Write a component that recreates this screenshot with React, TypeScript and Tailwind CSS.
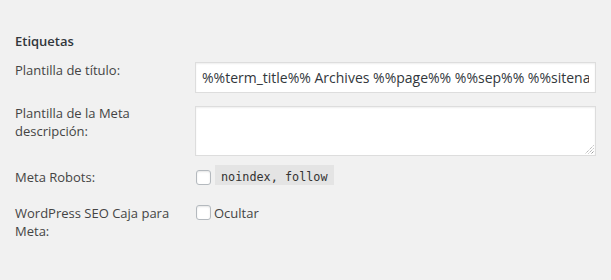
import React from "react";

const box =
  "bg-white border border-[#dddddd] shadow-[inset_0_1px_2px_rgba(0,0,0,0.07)]";
const check =
  "block w-[15px] h-[15px] rounded-[3px] border border-[#b4b9be] bg-white shadow-[inset_0_1px_2px_rgba(0,0,0,0.1)]";

export default function App() {
  return (
    <div
      className="w-[611px] h-[280px] bg-[#f1f1f1] text-[#444444] overflow-hidden"
      style={{ fontFamily: '"Open Sans", sans-serif' }}
    >
      <div className="pl-[15px] pt-[32px]">
        <h3 className="text-[13px] font-semibold text-[#32373c] leading-[18px] m-0">
          Etiquetas
        </h3>
        <div className="mt-[11px] flex flex-col">
          <div className="flex">
            <div className="w-[180px] text-[13px] leading-[18px]">Plantilla de título:</div>
            <div
              className={`${box} mt-[1px] w-[401px] h-[31px] px-[6px] flex items-center`}
            >
              <div className="w-full overflow-hidden whitespace-nowrap text-[14px] leading-[19px] text-[#32373c]">
                %%term_title%% Archives %%page%% %%sep%% %%sitename%%
              </div>
            </div>
          </div>
          <div className="flex mt-[11px]">
            <div className="w-[180px] text-[13px] leading-[18px]">
              Plantilla de la Meta
              <br />
              descripción:
            </div>
            <div className={`${box} relative mt-[2px] w-[401px] h-[50px]`}>
              <svg
                className="absolute right-[1px] bottom-[1px]"
                width="10"
                height="10"
                viewBox="0 0 10 10"
              >
                <line x1="9.5" y1="1.5" x2="1.5" y2="9.5" stroke="#9a9a9a" strokeWidth="1" strokeDasharray="1 1" />
                <line x1="9.5" y1="4.5" x2="4.5" y2="9.5" stroke="#9a9a9a" strokeWidth="1" strokeDasharray="1 1" />
                <line x1="9.5" y1="7.5" x2="7.5" y2="9.5" stroke="#9a9a9a" strokeWidth="1" />
              </svg>
            </div>
          </div>
          <div className="flex mt-[9px] items-start">
            <div className="w-[181px] text-[13px] leading-[18px] mt-[3px]">Meta Robots:</div>
            <span className={`${check} mt-[5px]`} />
            <code
              className="ml-[4px] bg-[#e4e4e4] px-[6px] h-[20px] pt-[4px] text-[11.8px] leading-[16px] text-[#333333] whitespace-nowrap"
              style={{ fontFamily: '"DejaVu Sans Mono", monospace' }}
            >
              noindex, follow
            </code>
          </div>
          <div className="flex mt-[18px] items-start">
            <div className="w-[181px] text-[13px] leading-[18px]">
              WordPress SEO Caja para
              <br />
              Meta:
            </div>
            <span className={`${check} mt-[1px]`} />
            <span className="ml-[3px] text-[13px] leading-[18px]">Ocultar</span>
          </div>
        </div>
      </div>
    </div>
  );
}
